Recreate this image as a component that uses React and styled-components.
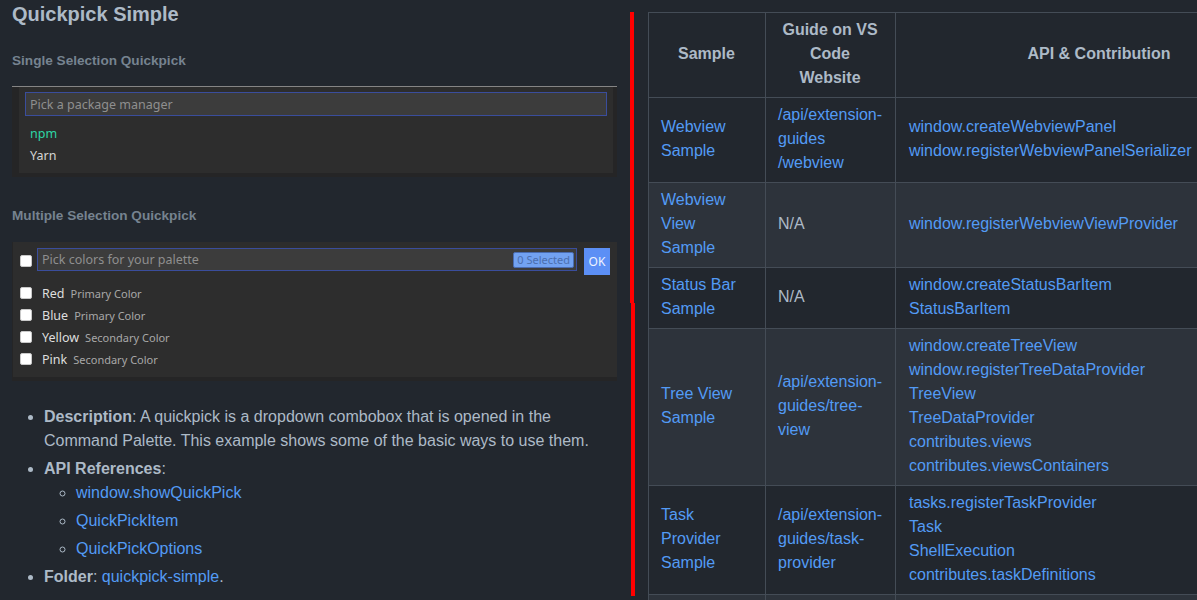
import React from 'react';
import styled, { createGlobalStyle } from 'styled-components';

const GlobalStyle = createGlobalStyle`
  html, body {
    margin: 0;
    padding: 0;
    background: #22272e;
  }
  body {
    font-family: "Liberation Sans", Arial, sans-serif;
    color: #adbac7;
    width: 1197px;
    height: 600px;
    overflow: hidden;
  }
`

const Page = styled.div`
  display: flex;
  align-items: flex-start;
  height: 600px;
  overflow: hidden;
  `
const LeftCol = styled.div`
  width: 606px;
  flex-shrink: 0;
  padding: 2px 12px 0 12px;
  `
const Title = styled.h3`
  margin: 0;
  font-size: 20px;
  line-height: 25px;
  font-weight: bold;
  color: #adbac7;
  `
const SubHead = styled.h6`
  margin: ${p => p.top}px 0 0 0;
  font-size: 13.6px;
  line-height: 17px;
  font-weight: bold;
  color: #768390;
  `

// screenshot of the VS Code quick input widgets
const Shot = styled.div`
  box-sizing: border-box;
  width: 605px;
  margin-top: ${p => p.top}px;
  background: #252526;
  border-top: ${p => p.edge ? '1px solid #858585' : 'none'};
  padding: ${p => p.edge ? '0 4px 4px 7px' : '0 0 4px 1px'};
  font-family: "Noto Sans", "Open Sans", sans-serif;
  font-size: 12.5px;
  `
const ShotInner = styled.div`
  background: #2d2d2d;
  padding: ${p => p.pad};
  `
const PickInput = styled.div`
  box-sizing: border-box;
  display: flex;
  align-items: center;
  justify-content: space-between;
  flex: ${p => p.grow ? 1 : 'none'};
  height: ${p => p.h}px;
  background: #3c3c3c;
  border: 1px solid #3a4d9c;
  padding: 0 2px 0 4px;
  color: #8f8f8f;
  `
const PickList = styled.div`
  margin-top: ${p => p.top}px;
  `
const PickItem = styled.div`
  height: 22px;
  line-height: 22px;
  padding-left: 5px;
  color: ${p => p.accent ? '#2ed6a6' : '#d4d4d4'};
  `
const HeadRow = styled.div`
  display: flex;
  align-items: flex-start;
  `
const Check = styled.span`
  box-sizing: border-box;
  width: 12px;
  height: 12px;
  flex-shrink: 0;
  margin-top: ${p => p.top || 0}px;
  background: #ffffff;
  border: 1px solid #c8c8c8;
  border-radius: 2px;
  `
const Badge = styled.span`
  box-sizing: border-box;
  height: 16px;
  line-height: 14px;
  padding: 0 3px;
  font-size: 11px;
  background: #72a2f1;
  border: 1px solid #4a6cb0;
  border-radius: 2px;
  color: #4c6fae;
  `
const OkButton = styled.button`
  width: 26px;
  height: 27px;
  margin-left: 7px;
  padding: 0;
  border: none;
  background: #5c8ff5;
  color: #eef3ff;
  font-family: "Noto Sans", "Open Sans", sans-serif;
  font-size: 12px;
  `
const MultiItem = styled.div`
  display: flex;
  align-items: center;
  height: 22px;
  gap: 10px;
  `
const ItemLabel = styled.span`
  color: #dedede;
  font-size: 12.5px;
  `
const ItemDesc = styled.span`
  margin-left: 6px;
  color: #a8a8a8;
  font-size: 11px;
  `

const Bullets = styled.ul`
  margin: ${p => p.top || 0}px 0 0 0;
  padding-left: 32px;
  font-size: 16px;
  line-height: 24px;
  list-style: ${p => p.nested ? 'circle' : 'disc'};
  li + li {
    margin-top: 4px;
  }
  `
const Strong = styled.b`
  font-weight: bold;
  color: #adbac7;
  `
const Link = styled.a`
  color: #539bf5;
  text-decoration: none;
  `

const Divider = styled.div`
  display: flex;
  flex-direction: column;
  flex-shrink: 0;
  width: 5px;
  margin-top: 12px;
  `
const RedBar = styled.span`
  display: block;
  width: 4px;
  height: ${p => p.h}px;
  margin-left: ${p => p.shift || 0}px;
  background: #ff0000;
  `

const RightCol = styled.div`
  flex-shrink: 0;
  margin-left: 13px;
  padding-top: 12px;
  `
const Table = styled.table`
  border-collapse: collapse;
  table-layout: fixed;
  width: 655px;
  font-size: 16px;
  line-height: 24px;
  th, td {
    border: 1px solid #444c56;
    padding: 5px 13px 7px 12px;
  }
  th {
    font-weight: bold;
    text-align: center;
    color: #adbac7;
  }
  td {
    vertical-align: middle;
  }
  td:last-child {
    padding-left: 13px;
  }
  tr {
    background: #22272e;
  }
  tbody tr:nth-child(2n) {
    background: #2d333b;
  }
  `

const rows = [
  { name: 'Webview Sample', guide: ['/api/extension-', 'guides', '/webview'], api: ['window.createWebviewPanel', 'window.registerWebviewPanelSerializer'] },
  { name: 'Webview View Sample', api: ['window.registerWebviewViewProvider'] },
  { name: 'Status Bar Sample', api: ['window.createStatusBarItem', 'StatusBarItem'] },
  { name: 'Tree View Sample', guide: ['/api/extension-', 'guides/tree-', 'view'], api: ['window.createTreeView', 'window.registerTreeDataProvider', 'TreeView', 'TreeDataProvider', 'contributes.views', 'contributes.viewsContainers'] },
  { name: 'Task Provider Sample', guide: ['/api/extension-', 'guides/task-', 'provider'], api: ['tasks.registerTaskProvider', 'Task', 'ShellExecution', 'contributes.taskDefinitions'] },
  { name: 'Multi Root Sample', api: ['workspace.getWorkspaceFolder', 'workspace.onDidChangeWorkspaceFolders'] },
]

const colors = [
  ['Red', 'Primary Color'],
  ['Blue', 'Primary Color'],
  ['Yellow', 'Secondary Color'],
  ['Pink', 'Secondary Color'],
]

const lines = (arr) => arr.map((t, i) => (
  <React.Fragment key={i}>{i > 0 && <br />}{t}</React.Fragment>
))

export default function App() {
  return (
    <>
      <GlobalStyle />
      <Page>
        <LeftCol>
          <Title>Quickpick Simple</Title>
          <SubHead top={25}>Single Selection Quickpick</SubHead>
          <Shot top={17} edge>
            <ShotInner pad='5px 6px 6px 6px'>
              <PickInput h={24}>Pick a package manager</PickInput>
              <PickList top={7}>
                <PickItem accent>npm</PickItem>
                <PickItem>Yarn</PickItem>
              </PickList>
            </ShotInner>
          </Shot>

          <SubHead top={30}>Multiple Selection Quickpick</SubHead>
          <Shot top={18}>
            <ShotInner pad='6px 7px 7px 7px'>
              <HeadRow>
                <Check top={7} />
                <PickInput h={23} grow style={{ marginLeft: 5 }}>
                  <span>Pick colors for your palette</span>
                  <Badge>0 Selected</Badge>
                </PickInput>
                <OkButton>OK</OkButton>
              </HeadRow>
              <PickList top={7}>
                {colors.map(([label, desc]) => (
                  <MultiItem key={label}>
                    <Check />
                    <span>
                      <ItemLabel>{label}</ItemLabel>
                      <ItemDesc>{desc}</ItemDesc>
                    </span>
                  </MultiItem>
                ))}
              </PickList>
            </ShotInner>
          </Shot>

          <Bullets top={24}>
            <li>
              <Strong>Description</Strong>: A quickpick is a dropdown combobox that is opened in the
              Command Palette. This example shows some of the basic ways to use them.
            </li>
            <li>
              <Strong>API References</Strong>:
              <Bullets nested>
                <li><Link href='#'>window.showQuickPick</Link></li>
                <li><Link href='#'>QuickPickItem</Link></li>
                <li><Link href='#'>QuickPickOptions</Link></li>
              </Bullets>
            </li>
            <li>
              <Strong>Folder</Strong>: <Link href='#'>quickpick-simple</Link>.
            </li>
          </Bullets>
        </LeftCol>

        <Divider>
          <RedBar h={291} />
          <RedBar h={293} shift={1} />
        </Divider>

        <RightCol>
          <Table>
            <colgroup>
              <col style={{ width: 117 }} />
              <col style={{ width: 130 }} />
              <col style={{ width: 408 }} />
            </colgroup>
            <thead>
              <tr>
                <th>Sample</th>
                <th>Guide on VS Code Website</th>
                <th>API &amp; Contribution</th>
              </tr>
            </thead>
            <tbody>
              {rows.map(r => (
                <tr key={r.name}>
                  <td><Link href='#'>{r.name}</Link></td>
                  <td>{r.guide ? <Link href='#'>{lines(r.guide)}</Link> : 'N/A'}</td>
                  <td><Link href='#'>{lines(r.api)}</Link></td>
                </tr>
              ))}
            </tbody>
          </Table>
        </RightCol>
      </Page>
    </>
  )
}
